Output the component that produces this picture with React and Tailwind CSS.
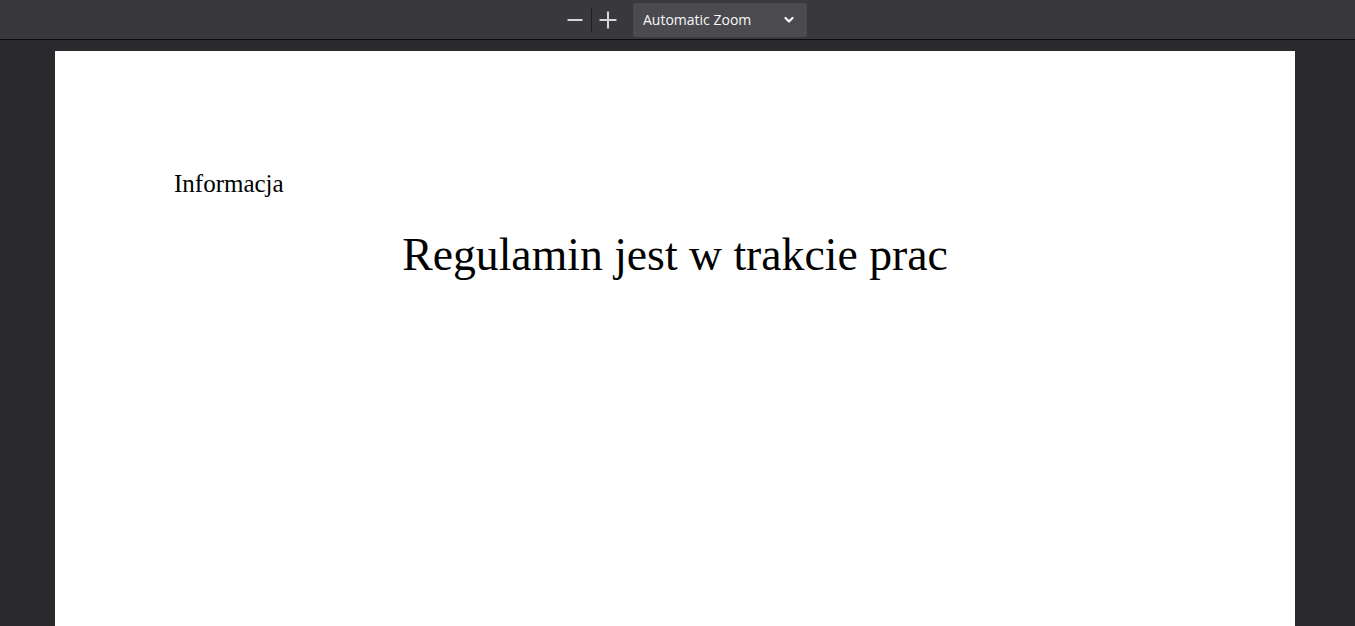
export default function App() {
  return (
    <div className="h-[626px] w-full overflow-hidden bg-[#2a2a2e] flex flex-col">
      <div className="h-[40px] shrink-0 bg-[#38383d] border-b border-[#0c0c0d] flex items-center justify-center">
        <div className="flex items-center ml-[14px]">
          <button className="w-[26px] h-[26px] flex items-center justify-center">
            <svg width="16" height="16" viewBox="0 0 16 16">
              <rect x="0.5" y="7" width="15" height="2" fill="#d7d7db" />
            </svg>
          </button>
          <div className="w-px h-[24px] bg-[#1f1f22] mx-[3px]" />
          <button className="w-[26px] h-[26px] flex items-center justify-center">
            <svg width="18" height="18" viewBox="0 0 18 18">
              <rect x="0.5" y="8" width="17" height="2" fill="#d7d7db" />
              <rect x="8" y="0.5" width="2" height="17" fill="#d7d7db" />
            </svg>
          </button>
          <div className="ml-[12px] w-[174px] h-[34px] rounded-[2px] bg-[#4a4a4f] flex items-center justify-between pl-[10px] pr-[13px]">
            <span className="text-[14px] text-[#f9f9fa]" style={{ fontFamily: '"Open Sans", sans-serif' }}>Automatic Zoom</span>
            <svg width="10" height="8" viewBox="0 0 10 8">
              <path d="M1.5 2 L5 5.5 L8.5 2" stroke="#f9f9fa" strokeWidth="2.2" fill="none" strokeLinecap="round" strokeLinejoin="round" />
            </svg>
          </div>
        </div>
      </div>
      <div className="flex-1 px-[55px] pt-[11px]">
        <div className="bg-white w-[1240px] h-[700px] pt-[120px]" style={{ fontFamily: '"Liberation Serif", "Times New Roman", serif' }}>
          <div className="pl-[119px] text-[25px] leading-none text-black">Informacja</div>
          <div className="mt-[36px] text-center text-[45.7px] leading-none text-black">Regulamin jest w trakcie prac</div>
        </div>
      </div>
    </div>
  );
}
